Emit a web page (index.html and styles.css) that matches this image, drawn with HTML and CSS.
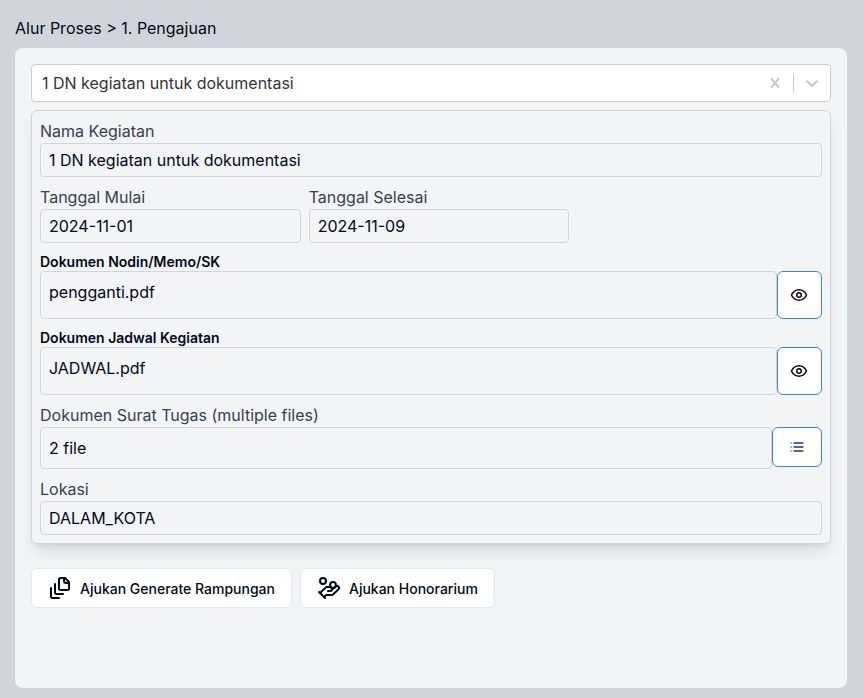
FILE: index.html
```html
<!DOCTYPE html>
<html lang="id">
<head>
<meta charset="utf-8">
<meta name="viewport" content="width=device-width, initial-scale=1">
<title>Pengajuan</title>
<link rel="stylesheet" href="styles.css">
</head>
<body>
<div class="page">
  <nav class="breadcrumb">Alur Proses &gt; 1. Pengajuan</nav>
  <main class="panel">
    <div class="picker">
      <select class="picker-select" aria-label="Kegiatan">
        <option>1 DN kegiatan untuk dokumentasi</option>
      </select>
      <button class="picker-button" type="button" aria-label="Hapus pilihan">
        <svg width="20" height="20" viewBox="0 0 20 20"><path d="M14.348 14.849c-0.469 0.469-1.229 0.469-1.697 0l-2.651-3.030-2.651 3.029c-0.469 0.469-1.229 0.469-1.697 0-0.469-0.469-0.469-1.229 0-1.697l2.758-3.15-2.759-3.152c-0.469-0.469-0.469-1.228 0-1.697s1.228-0.469 1.697 0l2.652 3.031 2.651-3.031c0.469-0.469 1.228-0.469 1.697 0s0.469 1.229 0 1.697l-2.758 3.152 2.758 3.15c0.469 0.469 0.469 1.229 0 1.698z"/></svg>
      </button>
      <span class="picker-separator"></span>
      <button class="picker-button" type="button" aria-label="Buka pilihan">
        <svg width="20" height="20" viewBox="0 0 20 20"><path d="M4.516 7.548c0.436-0.446 1.043-0.481 1.576 0l3.908 3.747 3.908-3.747c0.533-0.481 1.141-0.446 1.574 0 0.436 0.445 0.408 1.197 0 1.615-0.406 0.418-4.695 4.502-4.695 4.502-0.217 0.223-0.502 0.335-0.787 0.335s-0.57-0.112-0.789-0.335c0 0-4.287-4.084-4.695-4.502s-0.436-1.17 0-1.615z"/></svg>
      </button>
    </div>

    <form class="details">
      <div class="field">
        <label class="label" for="nama">Nama Kegiatan</label>
        <input class="value" id="nama" type="text" value="1 DN kegiatan untuk dokumentasi" readonly>
      </div>
      <div class="dates">
        <div class="field date">
          <label class="label" for="mulai">Tanggal Mulai</label>
          <input class="value" id="mulai" type="text" value="2024-11-01" readonly>
        </div>
        <div class="field date">
          <label class="label" for="selesai">Tanggal Selesai</label>
          <input class="value" id="selesai" type="text" value="2024-11-09" readonly>
        </div>
      </div>
      <div class="field">
        <label class="label label-strong" for="nodin">Dokumen Nodin/Memo/SK</label>
        <div class="file-row">
          <input class="value value-document" id="nodin" type="text" value="pengganti.pdf" readonly>
          <button class="file-button view-button" type="button" aria-label="Lihat Dokumen Nodin/Memo/SK">
            <svg class="line-icon" width="18" height="18" viewBox="0 0 24 24"><path d="M2 12s3-7 10-7 10 7 10 7-3 7-10 7-10-7-10-7Z"/><circle cx="12" cy="12" r="3"/></svg>
          </button>
        </div>
      </div>
      <div class="field">
        <label class="label label-strong" for="jadwal">Dokumen Jadwal Kegiatan</label>
        <div class="file-row">
          <input class="value value-document" id="jadwal" type="text" value="JADWAL.pdf" readonly>
          <button class="file-button view-button" type="button" aria-label="Lihat Dokumen Jadwal Kegiatan">
            <svg class="line-icon" width="18" height="18" viewBox="0 0 24 24"><path d="M2 12s3-7 10-7 10 7 10 7-3 7-10 7-10-7-10-7Z"/><circle cx="12" cy="12" r="3"/></svg>
          </button>
        </div>
      </div>
      <div class="field">
        <label class="label" for="surat">Dokumen Surat Tugas (multiple files)</label>
        <div class="file-row">
          <input class="value value-files" id="surat" type="text" value="2 file" readonly>
          <button class="file-button list-button" type="button" aria-label="Daftar Dokumen Surat Tugas">
            <svg width="16" height="16" viewBox="0 0 16 16"><path class="list-dots" d="M1 3h2v2H1zM1 7h2v2H1zM1 11h2v2H1zM4 3h11v2H4zM4 7h11v2H4zM4 11h11v2H4z"/><path class="list-lines" d="M5 3h9v2H5zM5 7h9v2H5zM5 11h9v2H5z"/></svg>
          </button>
        </div>
      </div>
      <div class="field">
        <label class="label" for="lokasi">Lokasi</label>
        <input class="value" id="lokasi" type="text" value="DALAM_KOTA" readonly>
      </div>
    </form>

    <div class="actions">
      <button class="action" type="button">
        <svg class="line-icon" width="24" height="24" viewBox="0 0 24 24"><path d="M21 7h-3a2 2 0 0 1-2-2V2"/><path d="M21 6v6.5c0 .8-.7 1.5-1.5 1.5h-7c-.8 0-1.5-.7-1.5-1.5v-9c0-.8.7-1.5 1.5-1.5H17Z"/><path d="M7 8v8.8c0 .3.2.6.4.8.2.2.5.4.8.4H15"/><path d="M3 12v8.8c0 .3.2.6.4.8.2.2.5.4.8.4H11"/></svg>
        Ajukan Generate Rampungan
      </button>
      <button class="action" type="button">
        <svg class="line-icon" width="24" height="24" viewBox="0 0 24 24"><path d="M11 15h2a2 2 0 1 0 0-4h-3c-.6 0-1.1.2-1.4.6L3 17"/><path d="m7 21 1.6-1.4c.3-.4.8-.6 1.4-.6h4c1.1 0 2.1-.4 2.8-1.2l4.6-4.4a2 2 0 0 0-2.75-2.91l-4.2 3.9"/><path d="m2 16 6 6"/><circle cx="16" cy="9" r="2.9"/><circle cx="6" cy="5" r="3"/></svg>
        Ajukan Honorarium
      </button>
    </div>
  </main>
</div>
</body>
</html>
```
FILE: styles.css
```css
* {
  box-sizing: border-box;
}

body {
  margin: 0;
  background: #d1d5db;
  color: #020817;
  font-family: Inter, "Liberation Sans", sans-serif;
  font-size: 16px;
  line-height: 24px;
}

button,
input,
select {
  margin: 0;
  font: inherit;
  color: inherit;
}

.page {
  display: flex;
  flex-direction: column;
  min-height: 100vh;
  padding: 16px 17px 10px 15px;
}

.breadcrumb {
  margin-bottom: 8px;
}

.panel {
  flex: 1;
  padding: 16px;
  overflow: hidden;
  background: #f3f4f6;
  border-radius: 8px;
}

.picker {
  display: flex;
  align-items: center;
  height: 38px;
  margin-bottom: 8px;
  background: #fff;
  border: 1px solid #ccc;
  border-radius: 4px;
}

.picker-select {
  flex: 1;
  min-width: 0;
  height: 100%;
  padding: 0 10px;
  appearance: none;
  background: none;
  border: 0;
  color: #333;
}

.picker-button {
  display: flex;
  padding: 8px;
  background: none;
  border: 0;
}

.picker-button svg {
  fill: #ccc;
}

.picker-separator {
  align-self: stretch;
  width: 1px;
  margin: 8px 0;
  background: #ccc;
}

.details {
  display: flex;
  flex-direction: column;
  gap: 8px;
  padding: 8px;
  border: 1px solid #d1d5db;
  border-radius: 6px;
  background: #f3f4f6;
  box-shadow: 0 10px 15px -3px rgb(0 0 0 / 0.1), 0 4px 6px -4px rgb(0 0 0 / 0.1);
}

.field {
  display: flex;
  flex-direction: column;
}

.dates {
  display: flex;
  gap: 8px;
}

.date {
  width: calc(100% / 3);
}

.label {
  color: #374151;
}

.label-strong {
  padding-top: 2px;
  color: #020817;
  font-size: 14px;
  font-weight: 600;
  line-height: 18px;
}

.value {
  width: 100%;
  min-width: 0;
  height: 34px;
  padding: 4px 8px;
  background: none;
  border: 1px solid #d1d5db;
  border-radius: 4px;
}

.file-row {
  display: flex;
  align-items: flex-start;
}

.value-document {
  height: 48px;
  padding: 8px 8px 14px;
}

.value-files {
  height: 42px;
  padding: 8px;
}

.file-button {
  display: flex;
  flex: none;
  align-items: center;
  justify-content: center;
  padding: 0;
  background: #fff;
  border: 1px solid #3b82f6;
  border-radius: 6px;
}

.view-button {
  justify-content: flex-start;
  width: 45px;
  height: 48px;
  padding: 0 12px;
}

.list-button {
  width: 50px;
  height: 40px;
}

.list-dots {
  fill: #b3b9d9;
}

.list-lines {
  fill: #5766ab;
}

.line-icon {
  flex: none;
  fill: none;
  stroke: currentColor;
  stroke-width: 2;
  stroke-linecap: round;
  stroke-linejoin: round;
}

.actions {
  display: flex;
  flex-wrap: wrap;
  gap: 8px;
  margin-top: 24px;
}

.action {
  display: flex;
  align-items: center;
  gap: 8px;
  height: 40px;
  padding: 0 16px;
  background: #fff;
  border: 1px solid #e2e8f0;
  border-radius: 6px;
  font-size: 14px;
  font-weight: 500;
  line-height: 21px;
}
```
